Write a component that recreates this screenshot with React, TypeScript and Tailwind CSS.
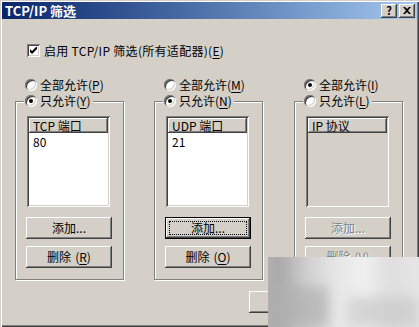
import type { ReactNode } from 'react';

const raised =
  'shadow-[inset_-1px_-1px_0_#404040,inset_1px_1px_0_#ffffff,inset_-2px_-2px_0_#808080,inset_2px_2px_0_#d4d0c8]';
const sunken =
  'shadow-[inset_1px_1px_0_#808080,inset_-1px_-1px_0_#ffffff,inset_2px_2px_0_#404040,inset_-2px_-2px_0_#d4d0c8]';

const Radio = ({ checked }: { checked: boolean }) => (
  <span
    className={`relative w-[12px] h-[12px] rounded-full bg-white shrink-0 flex items-center justify-center ${sunken}`}
  >
    {checked && <span className="w-[4px] h-[4px] rounded-full bg-black"></span>}
  </span>
);

const Key = ({ k }: { k: string }) => (
  <span>
    (<span className="underline underline-offset-2">{k}</span>)
  </span>
);

interface BtnProps {
  children: ReactNode;
  focused?: boolean;
  disabled?: boolean;
  width?: string;
}

const Button = ({ children, focused, disabled, width = 'w-[86px]' }: BtnProps) => (
  <div
    className={`${width} h-[22px] shrink-0 ${focused ? 'border border-black' : ''}`}
  >
    <div className={`w-full h-full bg-[#d4d0c8] flex items-center justify-center ${raised}`}>
      <div
        className={`flex items-center justify-center px-[3px] leading-none ${
          focused ? 'outline outline-1 outline-dotted outline-black w-[calc(100%-8px)] h-[calc(100%-8px)]' : ''
        } ${disabled ? 'text-[#808080] [text-shadow:1px_1px_0_#ffffff]' : 'text-black'}`}
      >
        {children}
      </div>
    </div>
  </div>
);

interface GroupProps {
  allKey: string;
  onlyKey: string;
  onlyChecked: boolean;
  header: string;
  items: string[];
  delKey: string;
  disabled?: boolean;
  focusAdd?: boolean;
  className?: string;
}

const FilterGroup = ({
  allKey,
  onlyKey,
  onlyChecked,
  header,
  items,
  delKey,
  disabled,
  focusAdd,
  className = '',
}: GroupProps) => (
  <div className={`w-[109px] flex flex-col shrink-0 ${className}`}>
    <div className="h-[12px] flex items-center pl-[10px] gap-[3px]">
      <Radio checked={!onlyChecked} />
      <span className="leading-none">
        全部允许<Key k={allKey} />
      </span>
    </div>

    <div className="relative mt-[10px] h-[179px] border border-[#808080] shadow-[1px_1px_0_#ffffff,inset_1px_1px_0_#ffffff] pt-[14px] pl-[10px]">
      {/* legend radio sitting on the frame */}
      <div className="absolute left-[8px] -top-[7px] h-[12px] flex items-center gap-[3px] bg-[#d4d0c8] pl-[1px] pr-[2px]">
        <Radio checked={onlyChecked} />
        <span className="leading-none">
          只允许<Key k={onlyKey} />
        </span>
      </div>

      <div
        className={`ml-[1px] w-[83px] h-[91px] p-[2px] ${sunken} ${disabled ? 'bg-[#d4d0c8]' : 'bg-white'}`}
      >
        <div className={`h-[15px] bg-[#d4d0c8] flex items-center pl-[4px] leading-none ${raised}`}>
          {header}
        </div>
        {items.map((it) => (
          <div key={it} className="mt-[2px] h-[14px] flex items-center pl-[4px] leading-none">
            {it}
          </div>
        ))}
      </div>

      <div className="mt-[10px]">
        <Button focused={focusAdd} disabled={disabled}>
          添加...
        </Button>
      </div>
      <div className="mt-[7px]">
        <Button disabled={disabled}>
          删除<span className="ml-[4px]"><Key k={delKey} /></span>
        </Button>
      </div>
    </div>
  </div>
);

const App = () => {
  return (
    <div
      className="relative w-[419px] h-[327px] overflow-hidden bg-[#d4d0c8] p-[2px] text-[12px] text-black shadow-[inset_1px_1px_0_#d4d0c8,inset_2px_2px_0_#ffffff,inset_-1px_-1px_0_#404040,inset_-2px_-2px_0_#808080]"
      style={{ fontFamily: '"Noto Sans CJK SC", "Liberation Sans", sans-serif' }}
    >
      {/* title bar */}
      <div className="h-[17px] flex items-center justify-between bg-gradient-to-r from-[#0a246a] to-[#a6caf0] pl-[3px] pr-[2px]">
        <span className="text-white font-bold text-[13px] leading-none">TCP/IP 筛选</span>
        <div className="flex gap-[2px]">
          <div className={`w-[16px] h-[14px] bg-[#d4d0c8] flex items-center justify-center font-bold text-[11px] leading-none ${raised}`}>
            ?
          </div>
          <div className={`w-[16px] h-[14px] bg-[#d4d0c8] flex items-center justify-center ${raised}`}>
            <svg width="8" height="7" viewBox="0 0 8 7">
              <path d="M0 0h2l2 2 2-2h2L5 3.5 8 7H6L4 5 2 7H0l3-3.5z" fill="#000" />
            </svg>
          </div>
        </div>
      </div>

      {/* enable checkbox */}
      <div className="mt-[25px] ml-[25px] h-[13px] flex items-center gap-[4px]">
        <div className={`w-[13px] h-[13px] bg-white flex items-center justify-center ${sunken}`}>
          <svg width="7" height="7" viewBox="0 0 7 7">
            <path d="M0 2v3l2 2 5-5V-1L2 4z" fill="#000" />
          </svg>
        </div>
        <span className="leading-none tracking-[0.3px]">
          启用 TCP/IP 筛选(所有适配器)<Key k="E" />
        </span>
      </div>

      {/* three filter columns */}
      <div className="mt-[22px] ml-[13px] flex">
        <FilterGroup
          allKey="P"
          onlyKey="Y"
          onlyChecked
          header="TCP 端口"
          items={['80']}
          delKey="R"
        />
        <FilterGroup
          className="ml-[30px]"
          allKey="M"
          onlyKey="N"
          onlyChecked
          header="UDP 端口"
          items={['21']}
          delKey="O"
          focusAdd
        />
        <FilterGroup
          className="ml-[31px]"
          allKey="I"
          onlyKey="L"
          onlyChecked={false}
          header="IP 协议"
          items={[]}
          delKey="V"
          disabled
        />
      </div>

      {/* dialog buttons */}
      <div className="mt-[11px] ml-[247px] flex gap-[6px]">
        <Button width="w-[75px]">确定</Button>
        <Button width="w-[75px]">取消</Button>
      </div>

      {/* blurred watermark patch over the corner */}
      <div className="absolute left-[268px] top-[257px] w-[151px] h-[70px] overflow-hidden bg-[#d8d8d8]">
        <div className="absolute -inset-[8px] blur-[5px] bg-[linear-gradient(90deg,#b4b4b4_0%,#a9a9a9_12%,#cfcfcf_28%,#e6e6e6_45%,#f0f0f0_62%,#dedede_78%,#e8e8e8_100%)]"></div>
        <div className="absolute left-[0px] top-[30px] w-[60px] h-[40px] blur-[6px] bg-[#b0b0b0] opacity-70"></div>
        <div className="absolute left-[80px] top-[40px] w-[70px] h-[30px] blur-[6px] bg-[#c4c4c4] opacity-60"></div>
      </div>
    </div>
  );
};

export default App;
